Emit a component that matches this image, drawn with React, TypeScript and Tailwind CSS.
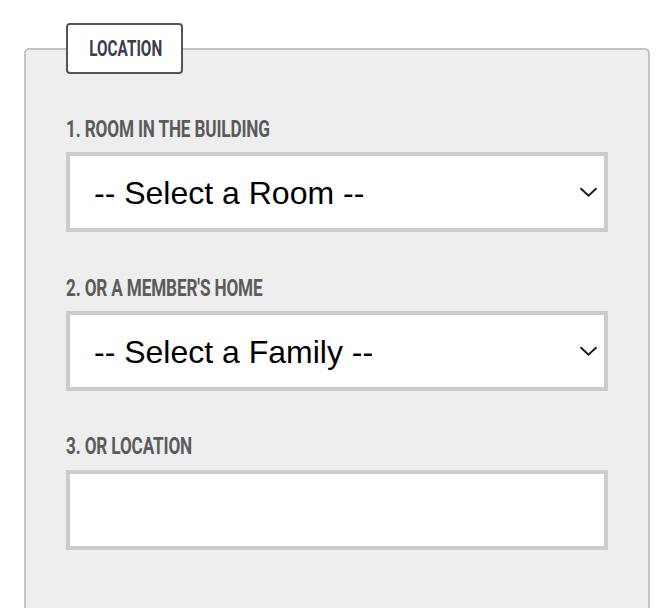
import React from "react";

const labelCls =
  "block h-[24px] leading-[24px] text-[24px] font-bold text-[#5b5b5b] whitespace-nowrap";

function Label({ children, mt }: { children: React.ReactNode; mt: string }) {
  return (
    <div className={`${labelCls} ${mt}`} style={{ fontFamily: "Roboto, sans-serif" }}>
      <span className="inline-block origin-left scale-x-[0.715] tracking-[-0.2px]">{children}</span>
    </div>
  );
}

function Chevron() {
  return (
    <svg
      className="pointer-events-none absolute right-[10px] top-1/2 -translate-y-1/2"
      width="19"
      height="11"
      viewBox="0 0 19 11"
      fill="none"
    >
      <path d="M1.5 1.8 L9.5 9.2 L17.5 1.8" stroke="#1c1c1c" strokeWidth="2" />
    </svg>
  );
}

function FakeSelect({ text, mt }: { text: string; mt: string }) {
  return (
    <div className={`relative ${mt}`}>
      <select
        className="block h-[80px] w-full appearance-none border-4 border-[#cccccc] bg-white pl-[24px] pt-[1px] text-[32px] text-black outline-none"
        style={{ fontFamily: '"Liberation Sans", Arial, sans-serif' }}
        defaultValue=""
      >
        <option value="">{text}</option>
      </select>
      <Chevron />
    </div>
  );
}

export default function App() {
  return (
    <div className="h-[608px] w-[668px] overflow-hidden bg-white">
      <div className="ml-[24px] mt-[48px] h-[600px] w-[626px] rounded-t-[5px] border-x-2 border-t-2 border-[#c3c3c3] bg-[#eeeeee] px-[40px]">
        <div
          className="-mt-[27px] flex h-[51px] w-[117px] items-center justify-center rounded-[4px] border-2 border-[#555555] bg-white"
          style={{ fontFamily: "Roboto, sans-serif" }}
        >
          <span className="inline-block translate-x-[1px] scale-x-[0.68] text-[22.5px] font-bold leading-none text-[#3c3c4a]">
            LOCATION
          </span>
        </div>

        <Label mt="mt-[43px]">1. ROOM IN THE BUILDING</Label>
        <FakeSelect text="-- Select a Room --" mt="mt-[11px]" />

        <Label mt="mt-[44px]">2. OR A MEMBER'S HOME</Label>
        <FakeSelect text="-- Select a Family --" mt="mt-[11px]" />

        <Label mt="mt-[43px]">3. OR LOCATION</Label>
        <input
          type="text"
          className="mt-[12px] block h-[80px] w-full border-4 border-[#cccccc] bg-white px-[20px] text-[28px] outline-none"
          style={{ fontFamily: '"Liberation Sans", Arial, sans-serif' }}
        />
      </div>
    </div>
  );
}
